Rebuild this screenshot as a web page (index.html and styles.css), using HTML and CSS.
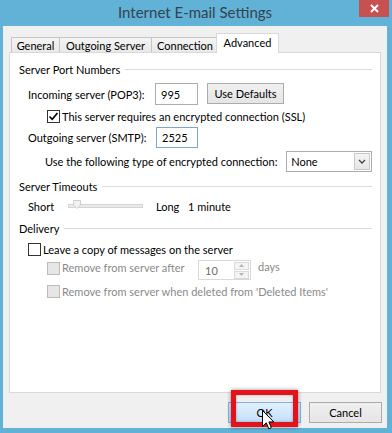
FILE: index.html
```html
<!DOCTYPE html>
<html>
<head>
<meta charset="utf-8">
<link rel="stylesheet" href="styles.css">
</head>
<body>
<div class="window">
  <div class="titlebar">
    <span></span>
    <div class="title">Internet E-mail Settings</div>
    <div class="close"><svg width="9" height="9" viewBox="0 0 9 9"><path d="M1 1L8 8M8 1L1 8" stroke="#fff" stroke-width="2"/></svg></div>
  </div>
  <div class="client">
    <div class="tabs">
      <div class="tab t-general">General</div>
      <div class="tab t-out">Outgoing Server</div>
      <div class="tab t-conn">Connection</div>
      <div class="tab sel">Advanced</div>
    </div>
    <div class="panel">
      <div class="ghead">Server Port Numbers</div>
      <div class="row r-in">
        <span class="lbl-in">Incoming server (POP3):</span>
        <div class="field f-in">995</div>
        <div class="btn b-def">Use Defaults</div>
      </div>
      <div class="row r-ssl">
        <span class="cb checked"><svg width="11" height="11" viewBox="0 0 11 11"><path d="M1.5 5.5L4.2 8.3L9.5 2" fill="none" stroke="#000" stroke-width="1.7"/></svg></span>
        <span class="cbl">This server requires an encrypted connection (SSL)</span>
      </div>
      <div class="row r-out">
        <span class="lbl-out">Outgoing server (SMTP):</span>
        <div class="field f-out">2525</div>
      </div>
      <div class="row r-enc">
        <span class="lbl-enc">Use the following type of encrypted connection:</span>
        <div class="select">
          <span class="sel-val">None</span>
          <span class="sel-btn"><svg width="8" height="5" viewBox="0 0 8 5"><path d="M1 1L4 4L7 1" fill="none" stroke="#444" stroke-width="1.3"/></svg></span>
        </div>
      </div>
      <div class="ghead g2">Server Timeouts</div>
      <div class="row r-to">
        <span class="lbl-short">Short</span>
        <div class="slider">
          <div class="track"></div>
          <svg class="thumb" width="8" height="9" viewBox="0 0 8 9"><path d="M0.5 0.5H7.5V5L4 8.5L0.5 5Z" fill="#f1f1f1" stroke="#cfcfcf"/></svg>
        </div>
        <span class="lbl-long">Long</span>
        <span>1 minute</span>
      </div>
      <div class="ghead g3">Delivery</div>
      <div class="row r-leave">
        <span class="cb"></span>
        <span class="cbl">Leave a copy of messages on the server</span>
      </div>
      <div class="row r-after">
        <span class="cb dis"></span>
        <span class="cbl dtext lbl-after">Remove from server after</span>
        <div class="spin">
          <span class="spin-val">10</span>
          <span class="spin-btns">
            <span class="sb"><svg width="5" height="3" viewBox="0 0 5 3"><path d="M0 3L2.5 0L5 3Z" fill="#b5b5b5"/></svg></span>
            <span class="sb"><svg width="5" height="3" viewBox="0 0 5 3"><path d="M0 0L2.5 3L5 0Z" fill="#b5b5b5"/></svg></span>
          </span>
        </div>
        <span class="days dtext">days</span>
      </div>
      <div class="row r-del">
        <span class="cb dis"></span>
        <span class="cbl dtext">Remove from server when deleted from 'Deleted Items'</span>
      </div>
    </div>
    <div class="buttons">
      <div class="btn b-ok">OK
        <span class="highlight"></span>
        <svg class="cursor" width="13" height="21" viewBox="0 0 13 21"><path d="M0.5 0.5V16.5L4.3 12.8L6.8 18.8L9.3 17.7L6.9 11.9H11.8Z" fill="#fff" stroke="#000" stroke-width="1" stroke-linejoin="round"/></svg>
      </div>
      <div class="btn b-cancel">Cancel</div>
    </div>
  </div>
</div>
</body>
</html>
```

FILE: styles.css
```css
* { box-sizing: border-box; }
body { margin: 0; }

.window {
  width: 392px;
  height: 433px;
  background: #62b1d6;
  padding: 0 5px 5px 3px;
  display: flex;
  flex-direction: column;
  font-family: Lato, "Noto Sans", sans-serif;
  font-size: 11px;
  color: #000;
  white-space: nowrap;
}

.titlebar {
  height: 26px;
  display: grid;
  grid-template-columns: 1fr auto 1fr;
  align-items: start;
}
.title {
  font-size: 15px;
  line-height: 24px;
  color: #33444e;
}
.close {
  justify-self: end;
  width: 30px;
  height: 17px;
  margin-right: -2px;
  background: #c75050;
  display: flex;
  align-items: center;
  justify-content: center;
}

.client {
  flex: 1;
  background: #f0f0f0;
  padding: 7px 6px 5px 6px;
  display: flex;
  flex-direction: column;
}

.tabs {
  display: flex;
  align-items: flex-end;
  height: 19px;
  padding-left: 2px;
}
.tab {
  height: 15px;
  border: 1px solid #c6c6c6;
  border-bottom: none;
  margin-right: -1px;
  background: linear-gradient(#f4f4f4, #e9e9e9);
  text-align: center;
  line-height: 15px;
}
.t-general { width: 49px; }
.t-out { width: 93px; }
.t-conn { width: 68px; }
.tab.sel {
  width: 63px;
  height: 20px;
  margin-left: -2px;
  margin-bottom: -1px;
  background: #fff;
  border-color: #d9d9d9;
  line-height: 18px;
  position: relative;
  z-index: 1;
}

.panel {
  flex: 1;
  background: #fff;
  border: 1px solid #d9d9d9;
  padding: 0 8px 0 9px;
  display: flex;
  flex-direction: column;
}

.ghead {
  display: flex;
  align-items: center;
  height: 16px;
  margin-top: 8px;
  gap: 5px;
}
.ghead::after {
  content: "";
  flex: 1;
  border-top: 1px solid #dcdcdc;
}
.g2, .g3 { margin-top: 6px; }

.row {
  display: flex;
  align-items: center;
}

.r-in { margin-top: 6px; height: 22px; padding-left: 9px; }
.lbl-in { width: 127px; }
.field {
  border: 1px solid #abadb3;
  background: #fff;
  padding-left: 5px;
  display: flex;
  align-items: center;
}
.f-in { width: 43px; height: 22px; }
.btn {
  border: 1px solid #acacac;
  background: linear-gradient(#f0f0f0, #e5e5e5);
  display: flex;
  align-items: center;
  justify-content: center;
}
.b-def { width: 77px; height: 21px; margin-left: 9px; margin-top: -2px; }

.r-ssl { margin-top: 4px; height: 14px; padding-left: 28px; }
.cb {
  width: 13px;
  height: 13px;
  border: 1px solid #333;
  background: #fff;
  display: flex;
  align-items: center;
  justify-content: center;
  flex: none;
}
.cb.dis { border-color: #bcbcbc; background: #e6e6e6; }
.cbl { margin-left: 2px; }
.dtext { color: #8a8a8a; }

.r-out { margin-top: 3px; height: 22px; padding-left: 9px; }
.lbl-out { width: 128px; }
.f-out { width: 42px; height: 21px; border-color: #7aa6cf; }

.r-enc { margin-top: 2px; height: 22px; padding-left: 26px; }
.lbl-enc { width: 242px; }
.select {
  width: 86px;
  height: 21px;
  border: 1px solid #acacac;
  background: #fff;
  display: flex;
  align-items: center;
  padding: 0 1px 0 4px;
}
.sel-val { flex: 1; }
.sel-btn {
  width: 16px;
  height: 17px;
  border: 1px solid #c9c9c9;
  background: linear-gradient(#f3f3f3, #e6e6e6);
  display: flex;
  align-items: center;
  justify-content: center;
}

.r-to { margin-top: 4px; height: 16px; padding-left: 9px; }
.lbl-short { width: 40px; }
.slider {
  width: 75px;
  height: 12px;
  display: flex;
  align-items: center;
  position: relative;
}
.track {
  width: 75px;
  height: 4px;
  border: 1px solid #d6d6d6;
  background: #e9e9e9;
}
.thumb {
  position: absolute;
  left: 5px;
  top: 0;
}
.lbl-long { margin-left: 13px; width: 32px; }

.r-leave { margin-top: 6px; height: 14px; padding-left: 9px; }
.r-leave .cbl { margin-left: 2px; }

.r-after {
  margin-top: 4px;
  height: 20px;
  padding-left: 28px;
  align-items: flex-start;
}
.r-after .cb { margin-top: 2px; }
.lbl-after { width: 136px; line-height: 16px; }
.spin {
  width: 53px;
  height: 20px;
  border: 1px solid #d9d9d9;
  display: flex;
  align-items: center;
  padding: 1px 1px 1px 6px;
}
.spin-val { flex: 1; color: #6d6d6d; }
.spin-btns {
  width: 15px;
  height: 17px;
  display: flex;
  flex-direction: column;
  gap: 1px;
}
.sb {
  flex: 1;
  border: 1px solid #dadada;
  background: #f4f4f4;
  display: flex;
  align-items: center;
  justify-content: center;
}
.days { margin-left: 7px; line-height: 14px; }

.r-del { margin-top: 4px; height: 14px; padding-left: 28px; }

.buttons {
  display: flex;
  justify-content: flex-end;
  gap: 8px;
  margin-top: 9px;
  margin-right: -1px;
  height: 21px;
}
.buttons .btn { width: 73px; height: 21px; }
.b-ok {
  position: relative;
  background: linear-gradient(#e3f0fc, #c4e0fc);
  border-color: #7eb4ea;
}
.b-cancel { width: 74px; }
.highlight {
  position: absolute;
  left: 2px;
  top: -13px;
  width: 67px;
  height: 37px;
  border: 5px solid #e3131b;
  box-shadow: 0 0 4px rgba(0, 0, 0, 0.45), inset 0 0 3px rgba(0, 0, 0, 0.3);
}
.cursor {
  position: absolute;
  left: 33px;
  top: 7px;
}
```
